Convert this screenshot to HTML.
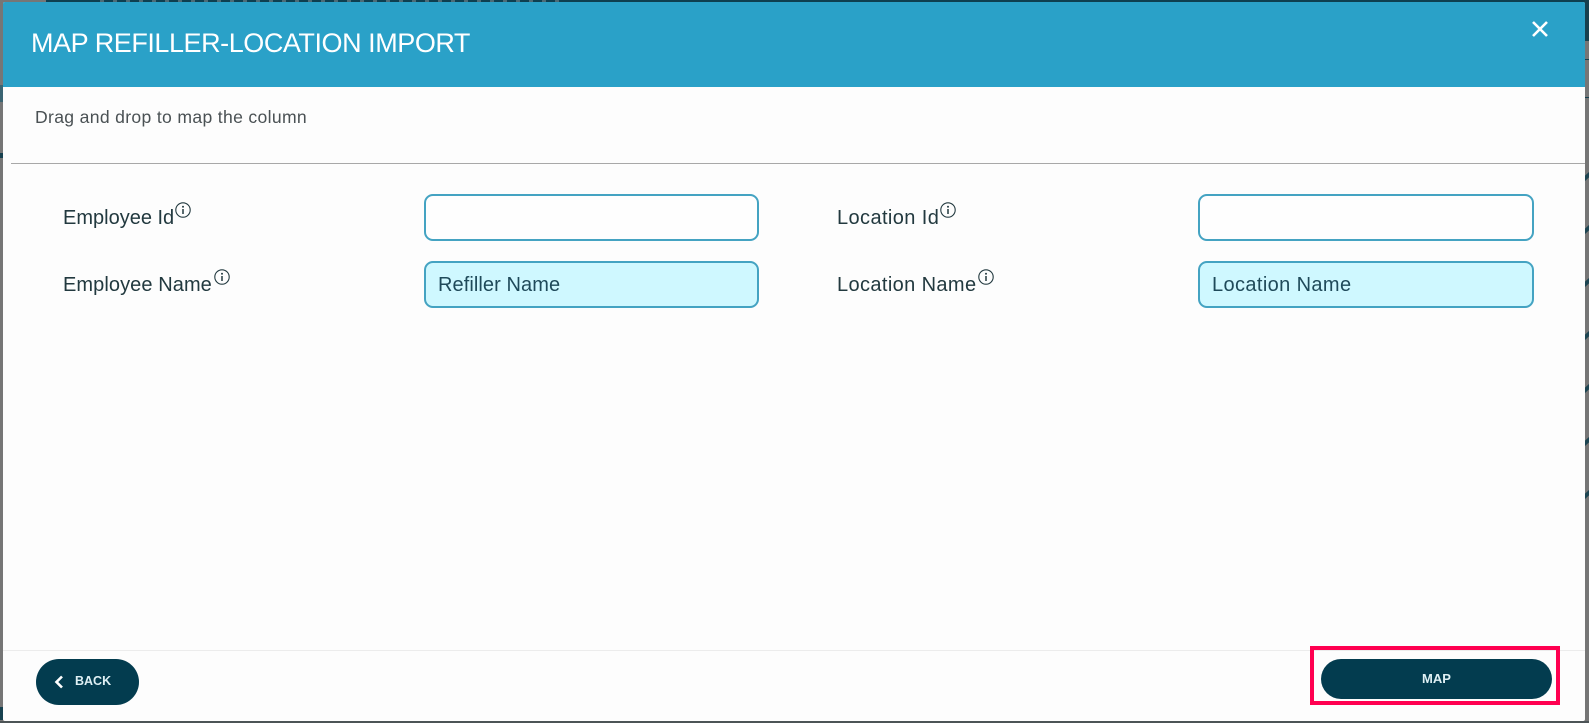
<!DOCTYPE html>
<html><head><meta charset="utf-8"><title>Map Refiller-Location Import</title>
<style>
*{box-sizing:border-box}
html,body{margin:0;padding:0}
body{width:1589px;height:723px;position:relative;overflow:hidden;background:#767676;font-family:"Liberation Sans",sans-serif}
.a{position:absolute}
.t{position:absolute;white-space:nowrap;line-height:1}
.lbl{font-size:20px;color:#22393f}
.in{position:absolute;width:336px;height:47px;border:2px solid #44a3c2;border-radius:9px;background:#fefefe}
.in.f{background:#cff8ff}
.val{font-size:20px;color:#1f4a5a}
.btn{position:absolute;background:#033c4f}
.m{position:absolute;left:1585px;width:4px;height:9px;background:#1d4552;clip-path:polygon(0 40%,100% 0,100% 60%,0 100%)}
svg{position:absolute;overflow:visible}
</style></head>
<body>
<div class="a" style="left:46px;top:0;width:1543px;height:3px;background:#0e3f50"></div>
<div class="a" style="left:100px;top:0;width:460px;height:2px;background:repeating-linear-gradient(90deg,#4d6b76 0 4px,#0e3f50 4px 13px)"></div>
<div class="a" style="left:1585px;top:0;width:4px;height:41px;background:#17414f"></div>
<div class="a" style="left:1585px;top:59px;width:4px;height:1px;background:#17414f"></div>
<div class="a" style="left:1585px;top:97px;width:4px;height:1px;background:#17414f"></div>
<div class="m" style="top:172px"></div><div class="m" style="top:225px"></div><div class="m" style="top:278px"></div><div class="m" style="top:331px"></div><div class="m" style="top:384px"></div><div class="m" style="top:437px"></div><div class="m" style="top:490px"></div>
<div class="a" style="left:0;top:85px;width:3px;height:17px;background:#3a6472"></div>
<div class="a" style="left:0;top:153px;width:3px;height:5px;background:#17414f"></div>
<div class="a" style="left:0;top:707px;width:3px;height:13px;background:#17414f"></div>
<div class="a" style="left:0;top:721px;width:1589px;height:2px;background:#4c5456"></div>

<div class="a" style="left:3px;top:2px;width:1582px;height:719px;background:#fdfdfd;border-radius:2px;overflow:hidden">
  <div class="a" style="left:0;top:0;width:1582px;height:85px;background:#2aa1c8"></div>
</div>

<div class="t" style="left:31px;top:30px;font-size:27px;color:#fff;letter-spacing:-.45px">MAP REFILLER-LOCATION IMPORT</div>
<svg style="left:1532px;top:21px" width="16" height="16" viewBox="0 0 16 16"><path d="M1 1L15 15M15 1L1 15" stroke="#fff" stroke-width="2.6" fill="none"/></svg>

<div class="t" style="left:35px;top:109px;font-size:17.6px;color:#4a5154;letter-spacing:.32px">Drag and drop to map the column</div>
<div class="a" style="left:11px;top:163px;width:1574px;height:1px;background:#a8a8a8"></div>

<div class="t lbl" style="left:63px;top:208px">Employee Id</div>
<svg style="left:175px;top:202px" width="16" height="16" viewBox="0 0 16 16"><circle cx="8" cy="8" r="7.2" fill="none" stroke="#22393f" stroke-width="1.1"/><path d="M8 7v5" stroke="#22393f" stroke-width="1.5"/><circle cx="8" cy="4.7" r="1" fill="#22393f"/></svg>
<div class="t lbl" style="left:63px;top:275px;letter-spacing:.08px">Employee Name</div>
<svg style="left:214px;top:269px" width="16" height="16" viewBox="0 0 16 16"><circle cx="8" cy="8" r="7.2" fill="none" stroke="#22393f" stroke-width="1.1"/><path d="M8 7v5" stroke="#22393f" stroke-width="1.5"/><circle cx="8" cy="4.7" r="1" fill="#22393f"/></svg>

<div class="in" style="left:424px;top:194px;width:335px"></div>
<div class="in f" style="left:424px;top:261px;width:335px"></div>
<div class="t val" style="left:438px;top:275px;letter-spacing:.08px">Refiller Name</div>

<div class="t lbl" style="left:837px;top:208px;letter-spacing:.4px">Location Id</div>
<svg style="left:940px;top:202px" width="16" height="16" viewBox="0 0 16 16"><circle cx="8" cy="8" r="7.2" fill="none" stroke="#22393f" stroke-width="1.1"/><path d="M8 7v5" stroke="#22393f" stroke-width="1.5"/><circle cx="8" cy="4.7" r="1" fill="#22393f"/></svg>
<div class="t lbl" style="left:837px;top:275px;letter-spacing:.38px">Location Name</div>
<svg style="left:978px;top:269px" width="16" height="16" viewBox="0 0 16 16"><circle cx="8" cy="8" r="7.2" fill="none" stroke="#22393f" stroke-width="1.1"/><path d="M8 7v5" stroke="#22393f" stroke-width="1.5"/><circle cx="8" cy="4.7" r="1" fill="#22393f"/></svg>

<div class="in" style="left:1198px;top:194px"></div>
<div class="in f" style="left:1198px;top:261px"></div>
<div class="t val" style="left:1212px;top:275px;letter-spacing:.38px">Location Name</div>

<div class="a" style="left:3px;top:650px;width:1582px;height:1px;background:#ececec"></div>

<div class="btn" style="left:36px;top:659px;width:103px;height:46px;border-radius:23px"></div>
<svg style="left:54px;top:675px" width="10" height="14" viewBox="0 0 10 14"><path d="M8 1.5L2.5 7L8 12.5" fill="none" stroke="#fff" stroke-width="2.6"/></svg>
<div class="t" style="left:75px;top:675px;font-size:12.5px;font-weight:bold;color:#dff0f4">BACK</div>

<div class="btn" style="left:1321px;top:659px;width:231px;height:40px;border-radius:20px"></div>
<div class="t" style="left:1422px;top:672px;font-size:13px;font-weight:bold;color:#dff0f4">MAP</div>

<div class="a" style="left:1310px;top:646px;width:250px;height:59px;border:4px solid #ff0050"></div>
</body></html>
